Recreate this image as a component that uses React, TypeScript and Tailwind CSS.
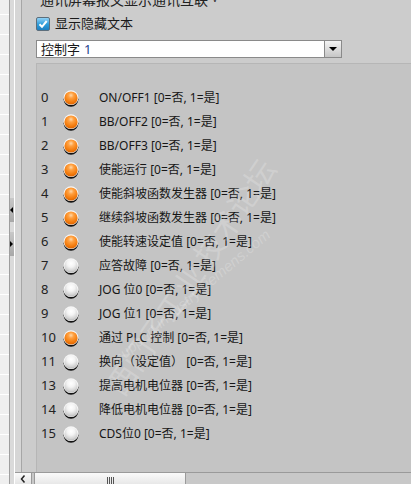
import React from "react";

const rows: { n: string; on: boolean; label: string }[] = [
  { n: "0", on: true, label: "ON/OFF1" },
  { n: "1", on: true, label: "BB/OFF2" },
  { n: "2", on: true, label: "BB/OFF3" },
  { n: "3", on: true, label: "使能运行" },
  { n: "4", on: true, label: "使能斜坡函数发生器" },
  { n: "5", on: true, label: "继续斜坡函数发生器" },
  { n: "6", on: true, label: "使能转速设定值" },
  { n: "7", on: false, label: "应答故障" },
  { n: "8", on: false, label: "JOG 位0" },
  { n: "9", on: false, label: "JOG 位1" },
  { n: "10", on: true, label: "通过 PLC 控制" },
  { n: "11", on: false, label: "换向（设定值）" },
  { n: "13", on: false, label: "提高电机电位器" },
  { n: "14", on: false, label: "降低电机电位器" },
  { n: "15", on: false, label: "CDS位0" },
];

function Led({ on, id }: { on: boolean; id: string }) {
  return (
    <svg width="16" height="17" viewBox="0 0 16 17" className="shrink-0">
      <defs>
        <radialGradient id={`g${id}`} cx="0.5" cy="0.3" r="0.7">
          {on ? (
            <>
              <stop offset="0" stopColor="#ffd7a8" />
              <stop offset="0.3" stopColor="#ffa040" />
              <stop offset="0.75" stopColor="#f27a0c" />
              <stop offset="1" stopColor="#d86404" />
            </>
          ) : (
            <>
              <stop offset="0" stopColor="#ffffff" />
              <stop offset="0.4" stopColor="#f4f4f4" />
              <stop offset="0.8" stopColor="#d2d2d2" />
              <stop offset="1" stopColor="#b4b4b4" />
            </>
          )}
        </radialGradient>
      </defs>
      <circle cx="8" cy="9.3" r="7.4" fill="#121212" />
      <circle cx="8" cy="7.7" r="7.4" fill="#f6f6f6" />
      <circle cx="8" cy="8" r="6.6" fill={`url(#g${id})`} />
    </svg>
  );
}

export default function App() {
  const font = { fontFamily: '"Noto Sans", "Noto Sans CJK SC", sans-serif' };
  return (
    <div
      className="relative flex h-[484px] w-[411px] overflow-hidden bg-[#cccccc] text-[#1e1e1e]"
      style={font}
    >
      {/* left side strip */}
      <div className="flex h-full w-[15px] shrink-0">
        <div className="flex h-full w-[9px] flex-col bg-[#efefef]">
          <div className="h-[15px] shrink-0 border-b border-white" />
          {Array.from({ length: 24 }).map((_, i) => (
            <div key={i} className="h-[20px] shrink-0 border-b border-white" />
          ))}
        </div>
        <div className="h-full w-px bg-[#9e9e9e]" />
        <div className="flex h-full w-[4px] flex-col bg-[#dadada]">
          <div className="h-[198px] shrink-0" />
          <div className="relative h-[24px] shrink-0 bg-gradient-to-b from-[#c8c8c8] to-[#a8a8a8]">
            <div className="absolute left-0 top-[9px] h-0 w-0 border-y-[3px] border-r-[3px] border-y-transparent border-r-black" />
          </div>
          <div className="h-[10px] shrink-0" />
          <div className="relative h-[24px] shrink-0 bg-gradient-to-b from-[#c8c8c8] to-[#a8a8a8]">
            <div className="absolute left-0 top-[9px] h-0 w-0 border-y-[3px] border-l-[3px] border-y-transparent border-l-black" />
          </div>
        </div>
        <div className="h-full w-px bg-white" />
      </div>

      {/* right column */}
      <div className="flex h-full flex-1 flex-col">
        <div className="flex min-h-0 flex-1">
          <div className="w-[6px] shrink-0 bg-[#d6d6d6]" />
          <div className="w-px shrink-0 bg-[#a6a6a6]" />
          <div className="flex min-w-0 flex-1 flex-col">
            {/* header area */}
            <div className="flex flex-col pl-[14px]">
              <div className="h-[8px] overflow-hidden">
                <div
                  className="-mt-[10px] flex items-center gap-1 pl-[4px] text-[14px] leading-[18px] text-[#222]"
                  style={{ fontFamily: '"Noto Sans CJK SC", sans-serif' }}
                >
                  <span>通讯屏幕报文显示通讯互联</span>
                  <span className="text-[10px]">˅</span>
                </div>
              </div>
              <div className="mt-[8px] flex h-[15px] items-center gap-[5px]">
                <div className="flex h-[14px] w-[14px] items-center justify-center rounded-[2px] border border-[#5c6e7c] bg-gradient-to-b from-[#8fd2f6] via-[#2f9fdc] to-[#1f7fc0]">
                  <svg width="10" height="10" viewBox="0 0 10 10">
                    <path d="M1.5 5.2 L4 7.8 L8.7 2" stroke="#fff" strokeWidth="2" fill="none" />
                  </svg>
                </div>
                <span className="text-[13px] leading-none text-[#1a1a1a]">显示隐藏文本</span>
              </div>
              <div className="mt-[9px] flex h-[18px] w-[306px] border border-[#8a8a8a] bg-white">
                <div className="flex flex-1 items-center pl-[4px] text-[13px] leading-none text-[#1a1a1a]">
                  控制字 <span className="ml-[4px] text-[#1f3f8f]">1</span>
                </div>
                <div className="flex w-[17px] items-center justify-center border-l border-[#8a8a8a] bg-gradient-to-b from-[#f4f4f4] to-[#c6c6c6]">
                  <div className="h-0 w-0 border-x-[4px] border-t-[4px] border-x-transparent border-t-black" />
                </div>
              </div>
              <div className="h-[5px]" />
            </div>
            {/* inner panel */}
            <div className="ml-[14px] flex min-h-0 flex-1 flex-col border-l border-t border-[#b6b6b6] bg-[#c4c4c4] pt-[22px]">
              {rows.map((r, i) => (
                <div key={i} className="flex h-[24px] items-center">
                  <div className="w-[26px] shrink-0 pl-[4px] text-[13px] text-[#222]">{r.n}</div>
                  <Led on={r.on} id={String(i)} />
                  <div className="ml-[20px] whitespace-nowrap text-[12px] text-[#161616]">
                    {r.label} [0=否, 1=是]
                  </div>
                </div>
              ))}
            </div>
          </div>
        </div>
        {/* horizontal scrollbar */}
        <div className="flex h-[12px] shrink-0 items-start border-t border-[#9a9a9a] bg-[#c8c8c8]">
          <div className="flex h-[12px] w-[17px] items-center justify-center border-r border-[#9a9a9a] bg-gradient-to-b from-[#fafafa] to-[#e2e2e2]">
            <svg width="6" height="8" viewBox="0 0 6 8">
              <path d="M4.5 0.5 L1.5 4 L4.5 7.5" stroke="#222" strokeWidth="1.5" fill="none" />
            </svg>
          </div>
          <div className="ml-[2px] flex h-[12px] w-[152px] justify-center border-x border-[#9a9a9a] bg-gradient-to-b from-[#fafafa] to-[#e6e6e6] pt-[4px]">
            <div className="flex gap-px">
              <div className="h-[8px] w-px bg-[#555]" />
              <div className="h-[8px] w-px bg-[#555]" />
              <div className="h-[8px] w-px bg-[#555]" />
              <div className="h-[8px] w-px bg-[#555]" />
            </div>
          </div>
        </div>
      </div>

      {/* watermark */}
      <div
        className="pointer-events-none absolute left-[112px] top-[376px] origin-left -rotate-[56deg] whitespace-nowrap text-[30px] leading-none text-white/20"
        style={{ fontFamily: '"Noto Sans CJK SC", sans-serif' }}
      >
        西门子工业 技术论坛
      </div>
      <div
        className="pointer-events-none absolute left-[116px] top-[352px] origin-left -rotate-[40deg] whitespace-nowrap text-[15px] italic leading-none text-white/20"
        style={{ fontFamily: '"Liberation Sans", sans-serif' }}
      >
        support.industry.siemens.com
      </div>
    </div>
  );
}
